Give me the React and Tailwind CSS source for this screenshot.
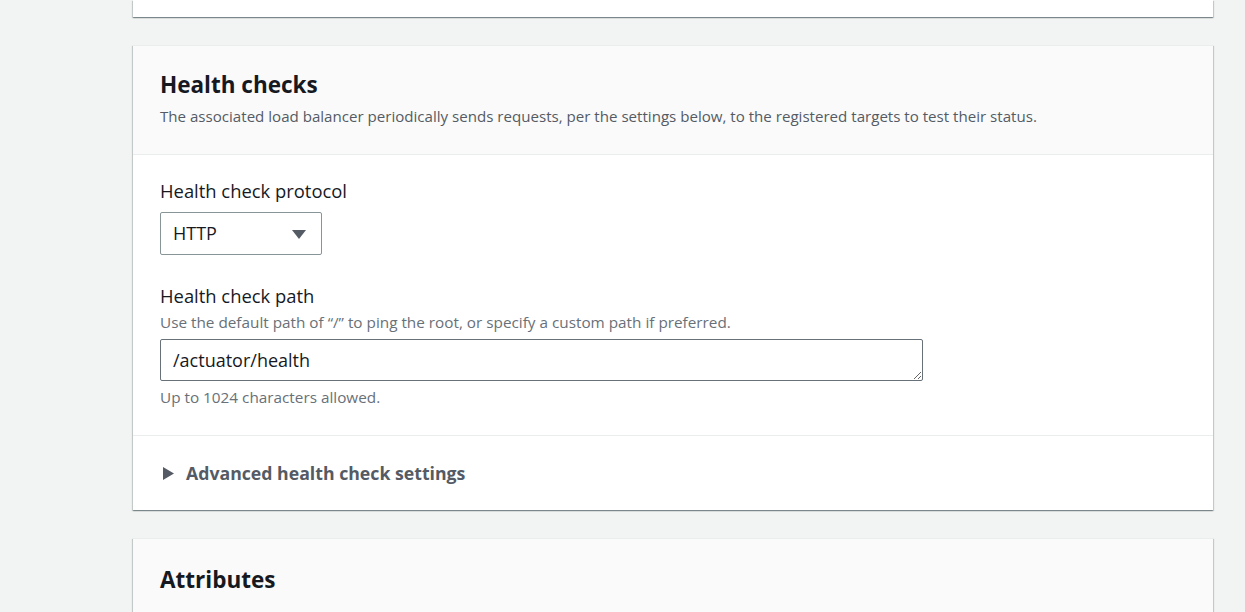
const cardShadow =
  'shadow-[0_1px_1px_0_rgba(0,28,36,0.3),1px_1px_1px_0_rgba(0,28,36,0.15),-1px_1px_1px_0_rgba(0,28,36,0.15)]';

export default function App() {
  return (
    <div
      className="h-screen bg-[#f2f3f3] pl-[133px] pr-[32px] overflow-hidden"
      style={{ fontFamily: '"Open Sans", "Noto Sans", Arial, sans-serif' }}
    >
      {/* previous card (cut off at top) */}
      <div className={`h-[17px] bg-white ${cardShadow}`} />

      {/* Health checks */}
      <div className={`mt-[28px] bg-white border-t border-[#eaeded] ${cardShadow}`}>
        <div className="bg-[#fafafa] border-b border-[#eaeded] pl-[27px] pr-[20px] pt-[24px] pb-[28px]">
          <h2 className="text-[22.5px] leading-[30px] font-bold text-[#16191f]">Health checks</h2>
          <p className="mt-[6px] text-[15.1px] leading-[20px] text-[#545b64]">
            The associated load balancer periodically sends requests, per the settings below, to the registered targets to test their status.
          </p>
        </div>

        <div className="pl-[27px] pr-[20px] pt-[25px] pb-[28px] border-b border-[#eaeded]">
          <label className="block text-[18.4px] leading-[22px] text-[#16191f]">Health check protocol</label>
          <div className="mt-[10px] w-[162px] h-[43px] border border-[#879596] rounded-[2px] flex items-center justify-between pl-[12px] pr-[14px]">
            <span className="text-[18px] text-[#16191f]">HTTP</span>
            <svg width="16" height="12" viewBox="0 0 16 12">
              <polygon points="1,2 15,2 8,11" fill="#545b64" />
            </svg>
          </div>

          <label className="block mt-[30px] text-[18.4px] leading-[22px] text-[#16191f]">Health check path</label>
          <p className="mt-[5px] text-[15.3px] leading-[20px] text-[#687078]">
            Use the default path of “/” to ping the root, or specify a custom path if preferred.
          </p>
          <textarea
            readOnly
            rows={1}
            value="/actuator/health"
            className="mt-[7px] block w-[763px] h-[42px] border border-[#687078] rounded-[2px] px-[12px] py-[8px] text-[18px] leading-[24px] text-[#16191f] bg-white outline-none resize-y"
            style={{ fontFamily: '"Open Sans", "Noto Sans", Arial, sans-serif' }}
          />
          <p className="mt-[6px] text-[15.3px] leading-[20px] text-[#687078]">Up to 1024 characters allowed.</p>
        </div>

        <div className="pl-[29px] pr-[20px] pt-[26px] pb-[26px] flex items-center gap-[11px]">
          <svg width="13" height="15" viewBox="0 0 13 15">
            <polygon points="1,1 12,7.5 1,14" fill="#545b64" />
          </svg>
          <span className="text-[17.7px] leading-[22px] font-bold text-[#545b64]">Advanced health check settings</span>
        </div>
      </div>

      {/* Attributes */}
      <div className={`mt-[28px] bg-[#fafafa] border-t border-[#eaeded] h-[120px] ${cardShadow}`}>
        <div className="pl-[27px] pt-[26px]">
          <h2 className="text-[22.5px] leading-[30px] font-bold text-[#16191f]">Attributes</h2>
        </div>
      </div>
    </div>
  );
}
